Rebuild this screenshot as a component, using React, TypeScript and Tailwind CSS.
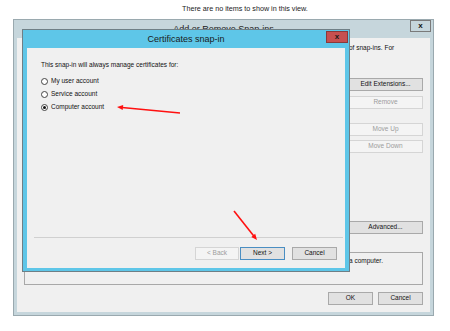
import React from 'react';
import clsx from 'clsx';

const font = { fontFamily: '"Liberation Sans", Arial, sans-serif' };

interface BtnProps {
  children: React.ReactNode;
  disabled?: boolean;
  focus?: boolean;
  className?: string;
}

const Btn: React.FC<BtnProps> = ({ children, disabled, focus, className }) => (
  <div
    className={clsx(
      'h-[13px] flex items-center justify-center text-[6.5px] leading-none border',
      disabled
        ? 'bg-[#f4f4f4] border-[#d5d5d5] text-[#9c9c9c]'
        : focus
          ? 'bg-[#e1e1e1] border-[#4a8ec2] text-[#111]'
          : 'bg-[#e1e1e1] border-[#a9a9a9] text-[#111]',
      className
    )}
  >
    {children}
  </div>
);

const Radio: React.FC<{ label: string; checked?: boolean }> = ({ label, checked }) => (
  <div className="flex items-center h-[13px] gap-[3px]">
    <div className="w-[7px] h-[7px] rounded-full border border-[#444] bg-white flex items-center justify-center">
      {checked && <div className="w-[3px] h-[3px] rounded-full bg-[#111]" />}
    </div>
    <span className="text-[6.5px] leading-none text-[#111]">{label}</span>
  </div>
);

export default function App() {
  return (
    <div className="relative w-[450px] h-[331px] bg-white overflow-hidden" style={font}>
      <p className="pt-[4px] pl-[182px] text-[7.2px] leading-[9px] text-[#222]">
        There are no items to show in this view.
      </p>

      {/* Add or Remove Snap-ins (behind) */}
      <div className="absolute left-[13px] top-[19px] w-[421px] h-[297px] border border-[#9aa9af] bg-[#c6d6dc] flex flex-col">
        <div className="relative h-[18px] flex items-center justify-center">
          <span className="text-[9px] leading-none text-[#222]">Add or Remove Snap-ins</span>
          <div className="absolute right-[2px] top-0 w-[21px] h-[12px] border border-[#7a7a7a] flex items-center justify-center">
            <span className="text-[8px] font-bold leading-none text-[#111]">x</span>
          </div>
        </div>
        <div className="mx-[3px] flex-1 mb-[3px] bg-[#f0f0f0] flex flex-col px-[7px] pt-[6px]">
          <div className="flex h-[208px]">
            <div className="flex-1" />
            <div className="w-[75px] flex flex-col">
              <p className="text-[6.5px] leading-[8px] text-[#111] pl-[1px] whitespace-nowrap">of snap-ins. For</p>
              <Btn className="mt-[26px]">Edit Extensions...</Btn>
              <Btn disabled className="mt-[5px]">Remove</Btn>
              <Btn disabled className="mt-[14px]">Move Up</Btn>
              <Btn disabled className="mt-[4px]">Move Down</Btn>
              <Btn className="mt-[68px] h-[12px]">Advanced...</Btn>
            </div>
          </div>
          <div className="h-[33px] border border-[#a8a8a8] flex justify-end">
            <div className="w-[73px] pt-[4px] text-[6.5px] leading-[8px] text-[#111]">a computer.</div>
          </div>
          <div className="flex justify-end gap-[5px] mt-[7px]">
            <Btn className="w-[45px]">OK</Btn>
            <Btn className="w-[45px]">Cancel</Btn>
          </div>
        </div>
      </div>

      {/* Certificates snap-in (front) */}
      <div className="absolute left-[22px] top-[29px] w-[328px] h-[243px] border border-[#6f7f86] bg-[#5ec6e8] flex flex-col">
        <div className="relative h-[18px] flex items-center justify-center">
          <span className="text-[9px] leading-none text-[#1a1a1a]">Certificates snap-in</span>
          <div className="absolute right-[1px] top-[1px] w-[22px] h-[12px] border border-[#8a3a3a] bg-[#c75050] flex items-center justify-center">
            <span className="text-[8px] font-bold leading-none text-[#1a1a1a]">x</span>
          </div>
        </div>
        <div className="mx-[4px] mb-[3px] flex-1 bg-[#f0f0f0] flex flex-col">
          <p className="pt-[13px] pl-[14px] text-[6.5px] leading-[8px] text-[#111]">
            This snap-in will always manage certificates for:
          </p>
          <div className="pl-[14px] pt-[6px] flex flex-col">
            <Radio label="My user account" />
            <Radio label="Service account" />
            <Radio label="Computer account" checked />
          </div>
          <div className="flex-1" />
          <div className="ml-[7px] mr-[2px] h-px bg-[#d0d0d0]" />
          <div className="flex justify-end pr-[8px] pt-[9px] pb-[8px]">
            <Btn disabled className="w-[44px] h-[12px]">&lt; Back</Btn>
            <Btn focus className="w-[45px] h-[12px] ml-[1px]">Next &gt;</Btn>
            <Btn className="w-[45px] h-[12px] ml-[7px]">Cancel</Btn>
          </div>
        </div>
      </div>

      {/* annotation arrows */}
      <svg className="absolute left-0 top-0 pointer-events-none" width="450" height="331" viewBox="0 0 450 331">
        <line x1="180" y1="113" x2="122" y2="107.5" stroke="#ff1010" strokeWidth="1.6" />
        <polygon points="117,107 123.2,105 122.7,110.1" fill="#ff1010" />
        <line x1="234" y1="211" x2="254" y2="236.3" stroke="#ff1010" strokeWidth="1.6" />
        <polygon points="257,240 251.3,236.9 255.2,233.8" fill="#ff1010" />
      </svg>
    </div>
  );
}
